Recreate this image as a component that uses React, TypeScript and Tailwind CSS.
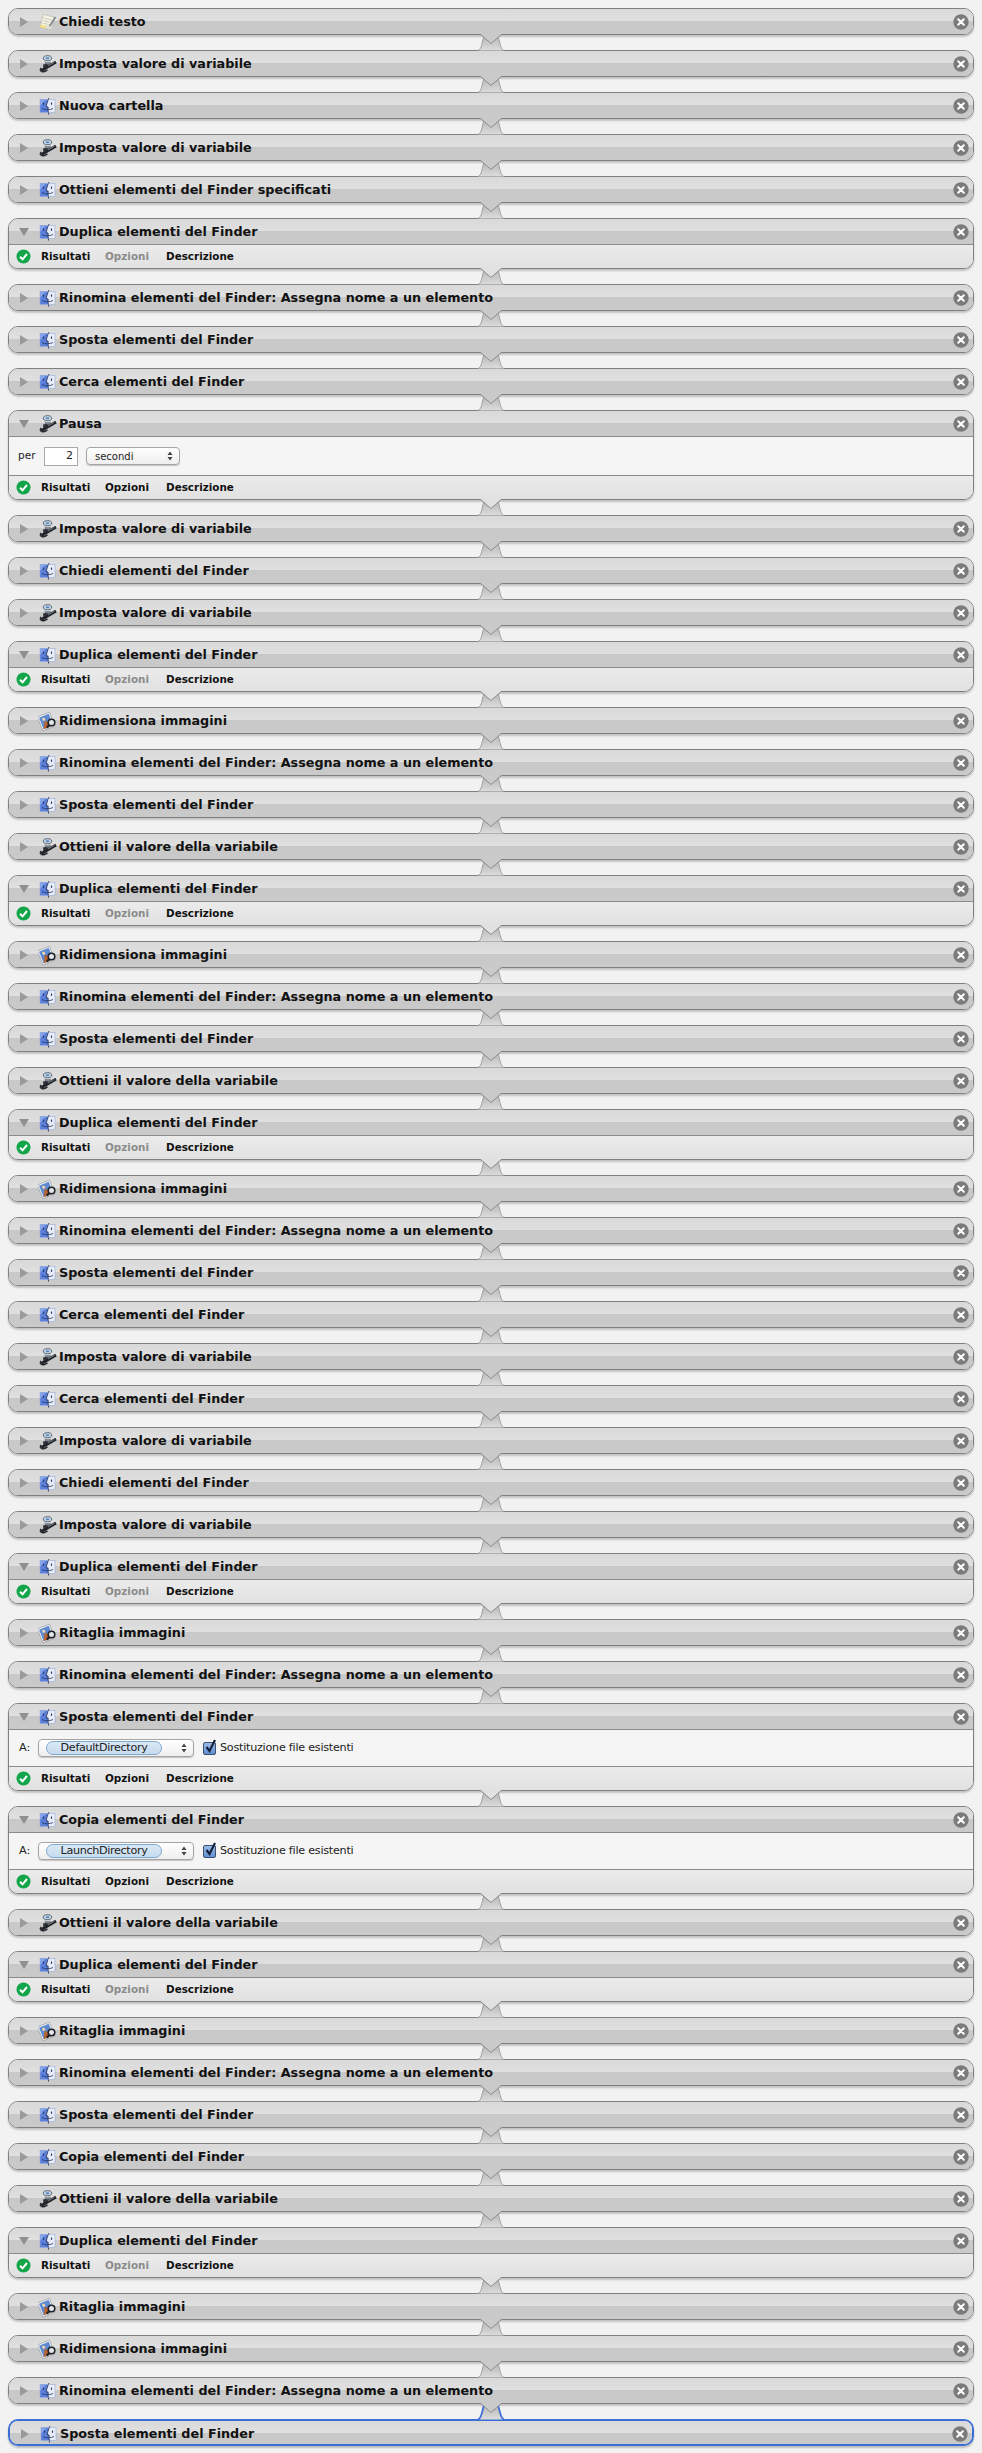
type IconName = "note" | "robot" | "finder" | "image"
type Action = {
  title: string
  icon: IconName
  kind?: "plain" | "results" | "pause" | "target"
  target?: { label: string; value: string }
  selected?: boolean
}

const IMPOSTA: Action = { title: "Imposta valore di variabile", icon: "robot" }
const OTTIENI: Action = { title: "Ottieni il valore della variabile", icon: "robot" }
const DUPLICA: Action = { title: "Duplica elementi del Finder", icon: "finder", kind: "results" }
const RINOMINA: Action = { title: "Rinomina elementi del Finder: Assegna nome a un elemento", icon: "finder" }
const SPOSTA: Action = { title: "Sposta elementi del Finder", icon: "finder" }
const CERCA: Action = { title: "Cerca elementi del Finder", icon: "finder" }
const CHIEDI: Action = { title: "Chiedi elementi del Finder", icon: "finder" }
const COPIA: Action = { title: "Copia elementi del Finder", icon: "finder" }
const RIDIMENSIONA: Action = { title: "Ridimensiona immagini", icon: "image" }
const RITAGLIA: Action = { title: "Ritaglia immagini", icon: "image" }

const actions: Action[] = [
  { title: "Chiedi testo", icon: "note" },
  IMPOSTA,
  { title: "Nuova cartella", icon: "finder" },
  IMPOSTA,
  { title: "Ottieni elementi del Finder specificati", icon: "finder" },
  DUPLICA,
  RINOMINA,
  SPOSTA,
  CERCA,
  { title: "Pausa", icon: "robot", kind: "pause" },
  IMPOSTA,
  CHIEDI,
  IMPOSTA,
  DUPLICA,
  RIDIMENSIONA,
  RINOMINA,
  SPOSTA,
  OTTIENI,
  DUPLICA,
  RIDIMENSIONA,
  RINOMINA,
  SPOSTA,
  OTTIENI,
  DUPLICA,
  RIDIMENSIONA,
  RINOMINA,
  SPOSTA,
  CERCA,
  IMPOSTA,
  CERCA,
  IMPOSTA,
  CHIEDI,
  IMPOSTA,
  DUPLICA,
  RITAGLIA,
  RINOMINA,
  { title: "Sposta elementi del Finder", icon: "finder", kind: "target", target: { label: "A:", value: "DefaultDirectory" } },
  { title: "Copia elementi del Finder", icon: "finder", kind: "target", target: { label: "A:", value: "LaunchDirectory" } },
  OTTIENI,
  DUPLICA,
  RITAGLIA,
  RINOMINA,
  SPOSTA,
  COPIA,
  OTTIENI,
  DUPLICA,
  RITAGLIA,
  RIDIMENSIONA,
  RINOMINA,
  { title: "Sposta elementi del Finder", icon: "finder", selected: true },
]

function ActionIcon({ name }: { name: IconName }) {
  if (name === "finder") {
    return (
      <svg width="17" height="18" viewBox="0 0 17 18">
        <rect x="1" y="2.500" width="15" height="13" fill="#e6ecf8" />
        <path d="M1 2.500h8.300C8 5 7.400 7.500 7 9.800h2c-.2 2 0 3.800.3 5.700H1z" fill="#5a80dc" />
        <path d="M1 2.500h6L1 9z" fill="#86a4ea" />
        <path d="M10 1C8.400 4.500 7.500 7.500 7.100 10h2c-.2 2.400 0 4.800.5 7.500" fill="none" stroke="#26325c" strokeWidth="0.9" />
        <path d="M4.500 5.500v2.300M12.500 5.500v2.300" stroke="#26325c" strokeWidth="1.100" />
        <path d="M3 11.500c2.500 1.700 8 1.700 11 0" fill="none" stroke="#26325c" strokeWidth="0.8" />
        <rect x="1" y="2.500" width="15" height="13" fill="none" stroke="#8ea3d3" strokeWidth="0.5" />
      </svg>
    )
  }
  if (name === "robot") {
    return (
      <svg width="18" height="19" viewBox="0 0 18 19">
        <ellipse cx="8.500" cy="3.200" rx="4.200" ry="2.500" fill="#c4d8ea" stroke="#4e5964" strokeWidth="0.9" />
        <ellipse cx="8.500" cy="3.200" rx="2" ry="1" fill="#5f87b8" />
        <path d="M5.500 6.500c2 1 4.500 1 6 0l.5 2.500-5.500 3z" fill="#7d858e" />
        <path d="M2.500 15.500 17 7" stroke="#1f2226" strokeWidth="3" />
        <path d="M9 11 15.500 7.200" stroke="#8f979f" strokeWidth="0.8" />
        <path d="M4 9.500c2-.8 4-.8 5.500.5L4.500 13.500z" fill="#2d3137" />
        <path d="M2.200 13c-2 2.500.3 4.500 3.300 3.500l3-1.500" fill="none" stroke="#26292d" strokeWidth="1.500" />
      </svg>
    )
  }
  if (name === "image") {
    return (
      <svg width="19" height="19" viewBox="0 0 19 19">
        <g transform="rotate(-22 8 9)">
          <rect x="1.500" y="2" width="13" height="15" fill="#f5f5f5" stroke="#8f959d" strokeWidth="0.6" />
          <rect x="2.800" y="3.300" width="10.400" height="12.400" fill="#5d8ad0" />
          <path d="M2.800 15.700 7 8l2.500 3 1.500-1 2.200 5.700z" fill="#b9642f" />
          <circle cx="6.500" cy="6.500" r="1.500" fill="#f2d9b0" />
        </g>
        <circle cx="13.500" cy="10.500" r="3.300" fill="#e3e6ea" stroke="#202327" strokeWidth="1.600" />
        <path d="M11 13.300 8.800 15.800" stroke="#202327" strokeWidth="2.200" />
      </svg>
    )
  }
  return (
    <svg width="18" height="18" viewBox="0 0 18 18">
      <g transform="rotate(14 8 9)">
        <rect x="2.500" y="2.500" width="11.500" height="13" fill="#f3f1e4" stroke="#b6b5a8" strokeWidth="0.6" />
        <path d="M4 6h8.500M4 8.500h8.500M4 11h8.500M4 13.500h8.500" stroke="#c8c8bc" strokeWidth="0.8" />
        <rect x="2.500" y="13" width="5.500" height="2.500" fill="#f4e47c" />
      </g>
      <path d="M16.500 4 10.500 13.500" stroke="#7f8386" strokeWidth="1.500" />
    </svg>
  )
}

function CloseButton() {
  return (
    <svg width="16" height="16" viewBox="0 0 16 16" className="shrink-0">
      <circle cx="8" cy="8" r="7.700" fill="#7b7b7b" />
      <path d="M5.200 5.200 10.800 10.800M10.800 5.200 5.200 10.800" stroke="#fff" strokeWidth="2" strokeLinecap="round" />
    </svg>
  )
}

function StepArrows() {
  return (
    <svg width="6" height="10" viewBox="0 0 6 10">
      <path d="M3 .5 5.500 4h-5zM3 9.500 .5 6h5z" fill="#444" />
    </svg>
  )
}

// the little tab that joins an action to the one above it
function Connector({ tongue, selected }: { tongue: string; selected?: boolean }) {
  return (
    <svg width="28" height="17" viewBox="0 0 28 17" className="absolute left-[469px] top-[-16px]">
      <defs>
        <linearGradient id="tab" x1="0" y1="0" x2="0" y2="1">
          <stop offset="0" stopColor="#b4b4b4" />
          <stop offset="1" stopColor="#dcdcdc" />
        </linearGradient>
      </defs>
      <path d="M1 16.500C5 16 5 6 7.500 1h13c2.500 5 2.500 15 6.500 15.500z" fill="url(#tab)" />
      <path
        d="M1 16.500C5 16 5 6 7.500 1M20.500 1c2.500 5 2.500 15 6.500 15.500"
        fill="none"
        stroke={selected ? "#3b6fd6" : "#a0a0a0"}
        strokeWidth={selected ? 1.800 : 1}
      />
      <path d="M3.500 0 14 9.500 24.500 0z" fill={tongue} />
      <path d="M3.500 .5 14 9.500 24.500 .5" fill="none" stroke="#8c8c8c" strokeWidth="1" />
    </svg>
  )
}

function Header({ action, open }: { action: Action; open: boolean }) {
  return (
    <div className="flex h-[26px] shrink-0 items-center bg-[linear-gradient(#d9d9d9_0%,#e0e0e0_48%,#c8c8c8_48%,#cacaca_100%)] pr-[4px]">
      <div className="flex w-[27px] shrink-0 justify-center pl-[3px]">
        {open ? (
          <div className="h-0 w-0 border-x-[5px] border-t-[8px] border-x-transparent border-t-[#8f8f8f]" />
        ) : (
          <div className="h-0 w-0 border-y-[5px] border-l-[8px] border-y-transparent border-l-[#9a9a9a]" />
        )}
      </div>
      <div className="flex w-[23px] shrink-0 justify-center">
        <ActionIcon name={action.icon} />
      </div>
      <span className="flex-1 text-[12.75px] leading-none font-bold text-[#111]">{action.title}</span>
      <CloseButton />
    </div>
  )
}

function Footer({ muted }: { muted: boolean }) {
  return (
    <div className="flex h-[23px] shrink-0 items-center bg-[linear-gradient(#ebebeb,#e1e1e1)] pl-[7px] text-[10.4px] font-bold text-[#111]">
      <svg width="15" height="15" viewBox="0 0 15 15" className="shrink-0">
        <circle cx="7.500" cy="7.500" r="7" fill="#12a54a" />
        <path d="M4 7.700 6.500 10.300 11 5" fill="none" stroke="#fff" strokeWidth="2" />
      </svg>
      <span className="ml-[10px] w-[64px]">Risultati</span>
      <span className={muted ? "w-[61px] text-[#8b8b8b]" : "w-[61px]"}>Opzioni</span>
      <span>Descrizione</span>
    </div>
  )
}

function PauseBody() {
  return (
    <div className="relative -mt-px flex h-[40px] shrink-0 items-center border-y border-[#8a8a8a] bg-[#f5f5f5] pl-[9px] text-[10.5px] text-[#222]">
      <span className="w-[26px]">per</span>
      <div className="flex h-[19px] w-[34px] items-center justify-end border border-[#a9a9a9] bg-white pr-[4px] text-[11px]">2</div>
      <div className="ml-[8px] flex h-[18px] w-[94px] items-center justify-between rounded-[4px] border border-[#a5a5a5] bg-[linear-gradient(#ffffff,#eeeeee)] pr-[6px] pl-[8px] text-[10px] shadow-[0_1px_1px_rgba(0,0,0,0.2)]">
        <span>secondi</span>
        <StepArrows />
      </div>
    </div>
  )
}

function TargetBody({ label, value }: { label: string; value: string }) {
  return (
    <div className="relative -mt-px flex h-[38px] shrink-0 items-center border-y border-[#8a8a8a] bg-[#f5f5f5] pl-[10px] text-[11.2px] text-[#222]">
      <span className="w-[19px]">{label}</span>
      <div className="flex h-[18px] w-[156px] items-center justify-between rounded-[4px] border border-[#a5a5a5] bg-[linear-gradient(#ffffff,#eeeeee)] pr-[6px] pl-[7px] shadow-[0_1px_1px_rgba(0,0,0,0.2)]">
        <span className="flex h-[14px] w-[116px] items-center justify-center rounded-full border border-[#7ea9cf] bg-[linear-gradient(#d9e8f5,#c7dcef)] tracking-[-0.35px]">
          {value}
        </span>
        <StepArrows />
      </div>
      <div className="relative ml-[9px] h-[13px] w-[13px] rounded-[2px] border border-[#3c4f70] bg-[linear-gradient(#9dbce6,#5f8fd2)]">
        <svg width="15" height="16" viewBox="0 0 15 16" className="absolute top-[-5px] left-[0px]">
          <path d="M2.500 9 5.500 13 11 2" fill="none" stroke="#14213d" strokeWidth="2.200" />
        </svg>
      </div>
      <span className="ml-[4px] tracking-[-0.25px]">Sostituzione file esistenti</span>
    </div>
  )
}

function ActionCard({ action, previous }: { action: Action; previous?: Action }) {
  const kind = action.kind ?? "plain"
  const open = kind !== "plain"
  const heightClass = kind === "plain" ? "h-[27px]" : kind === "results" ? "h-[51px]" : kind === "pause" ? "h-[90px]" : "h-[88px]"
  const tongue = previous && previous.kind ? "#e1e1e1" : "#cacaca"
  return (
    <div className={`relative ${heightClass}`}>
      {previous && <Connector tongue={tongue} selected={action.selected} />}
      <div
        className={
          action.selected
            ? "flex h-full flex-col overflow-hidden rounded-[10px] border-2 border-[#3b6fd6] shadow-[0_2px_2px_rgba(0,0,0,0.22)]"
            : "flex h-full flex-col overflow-hidden rounded-[10px] border border-[#808080] shadow-[0_2px_2px_rgba(0,0,0,0.2)]"
        }
      >
        <Header action={action} open={open} />
        {kind === "pause" && <PauseBody />}
        {kind === "target" && action.target && <TargetBody label={action.target.label} value={action.target.value} />}
        {open && kind !== "results" && <Footer muted={false} />}
        {kind === "results" && (
          <div className="relative -mt-px border-t border-[#8a8a8a]">
            <Footer muted />
          </div>
        )}
      </div>
    </div>
  )
}

export default function App() {
  return (
    <div className="flex flex-col gap-[15px] bg-[#f2f2f2] px-[8px] pt-[8px] pb-[7px] font-['DejaVu_Sans',sans-serif]">
      {actions.map((action, i) => (
        <ActionCard key={i} action={action} previous={actions[i - 1]} />
      ))}
    </div>
  )
}
